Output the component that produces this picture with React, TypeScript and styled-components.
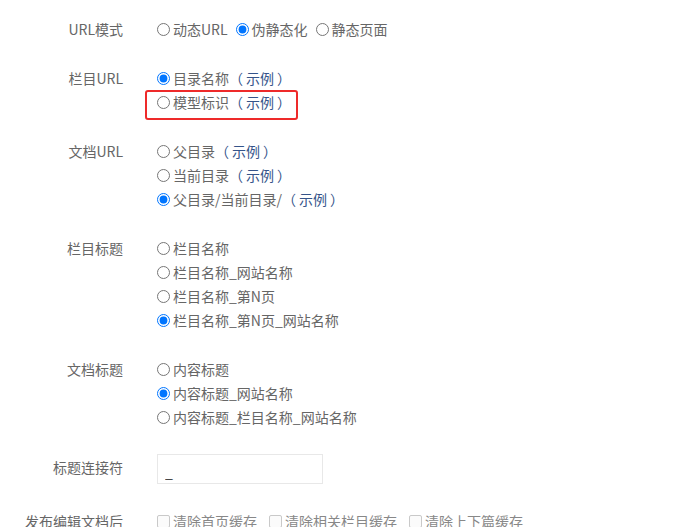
import * as React from 'react'
import styled, { createGlobalStyle } from 'styled-components'

const GlobalStyle = createGlobalStyle`
  html, body {
    margin: 0;
    padding: 0;
    background: #fff;
  }
  body {
    font-family: "Noto Sans CJK SC", "Noto Sans", sans-serif;
    font-size: 14px;
    color: #666;
  }
`

const Form = styled.div`
  padding-top: 17px;
  width: 681px;
  height: 527px;
  overflow: hidden;
`

const FormItem = styled.div`
  display: grid;
  grid-template-columns: 123px 1fr;
  column-gap: 34px;
  align-items: start;
  margin-bottom: 25px;
`

const Label = styled.div<{ $lh?: number }>`
  text-align: right;
  line-height: ${p => p.$lh || 24}px;
  white-space: nowrap;
  color: #666;
`

const Options = styled.div<{ $inline?: boolean }>`
  display: flex;
  flex-direction: ${p => (p.$inline ? 'row' : 'column')};
  align-items: flex-start;
`

const Option = styled.label<{ $marked?: boolean }>`
  position: relative;
  display: flex;
  align-items: center;
  height: 24px;
  line-height: 24px;
  margin-right: 8px;
  white-space: nowrap;
  color: #666;

  ${p =>
    p.$marked &&
    `
    &::after {
      content: '';
      position: absolute;
      left: -12px;
      right: -7px;
      top: 0;
      bottom: -6px;
      border: 2px solid #ee2a2a;
      border-radius: 3px;
      pointer-events: none;
    }
  `}
`

const Radio = styled.input.attrs({ type: 'radio' })`
  width: 13px;
  height: 13px;
  margin: 0 3px 0 0;
`

const Demo = styled.span`
  color: #35548a;
`

const DemoWord = styled.span`
  padding: 0 3px;
`

const TextInput = styled.input`
  box-sizing: border-box;
  width: 166px;
  height: 30px;
  margin-top: 0;
  padding: 6px 7px 0;
  border: 1px solid #e8e8e8;
  font-family: inherit;
  font-size: 14px;
  color: #333;
  outline: none;
`

const Checks = styled.div`
  display: flex;
  align-items: center;
  line-height: 24px;
`

const Check = styled.label`
  display: flex;
  align-items: center;
  margin-right: 12px;
  color: #888;
  white-space: nowrap;
`

const Box = styled.span`
  box-sizing: border-box;
  width: 13px;
  height: 13px;
  margin-right: 3px;
  border: 1px solid #c9c9c9;
  border-radius: 2px;
  background: #fbfbfb;
`

interface OptionDef {
  text: string
  demo?: boolean
  checked?: boolean
  marked?: boolean
}

function RadioGroup(props: { name: string; options: OptionDef[]; inline?: boolean }) {
  const { name, options, inline } = props
  return (
    <Options $inline={inline}>
      {options.map(o => (
        <Option key={o.text} $marked={o.marked}>
          <Radio name={name} defaultChecked={o.checked} />
          {o.text}
          {o.demo && <Demo>（<DemoWord>示例</DemoWord>）</Demo>}
        </Option>
      ))}
    </Options>
  )
}

export default function App() {
  return (
    <>
      <GlobalStyle />
      <Form>
        <FormItem>
          <Label>URL模式</Label>
          <RadioGroup
            name='urlmode'
            inline
            options={[
              { text: '动态URL' },
              { text: '伪静态化', checked: true },
              { text: '静态页面' },
            ]}
          />
        </FormItem>
        <FormItem>
          <Label>栏目URL</Label>
          <RadioGroup
            name='caturl'
            options={[
              { text: '目录名称', demo: true, checked: true },
              { text: '模型标识', demo: true, marked: true },
            ]}
          />
        </FormItem>
        <FormItem>
          <Label>文档URL</Label>
          <RadioGroup
            name='docurl'
            options={[
              { text: '父目录', demo: true },
              { text: '当前目录', demo: true },
              { text: '父目录/当前目录/', demo: true, checked: true },
            ]}
          />
        </FormItem>
        <FormItem>
          <Label>栏目标题</Label>
          <RadioGroup
            name='cattitle'
            options={[
              { text: '栏目名称' },
              { text: '栏目名称_网站名称' },
              { text: '栏目名称_第N页' },
              { text: '栏目名称_第N页_网站名称', checked: true },
            ]}
          />
        </FormItem>
        <FormItem>
          <Label>文档标题</Label>
          <RadioGroup
            name='doctitle'
            options={[
              { text: '内容标题' },
              { text: '内容标题_网站名称', checked: true },
              { text: '内容标题_栏目名称_网站名称' },
            ]}
          />
        </FormItem>
        <FormItem>
          <Label $lh={26}>标题连接符</Label>
          <TextInput defaultValue='_' />
        </FormItem>
        <FormItem>
          <Label>发布编辑文档后</Label>
          <Checks>
            <Check><Box />清除首页缓存</Check>
            <Check><Box />清除相关栏目缓存</Check>
            <Check><Box />清除上下篇缓存</Check>
          </Checks>
        </FormItem>
      </Form>
    </>
  )
}
